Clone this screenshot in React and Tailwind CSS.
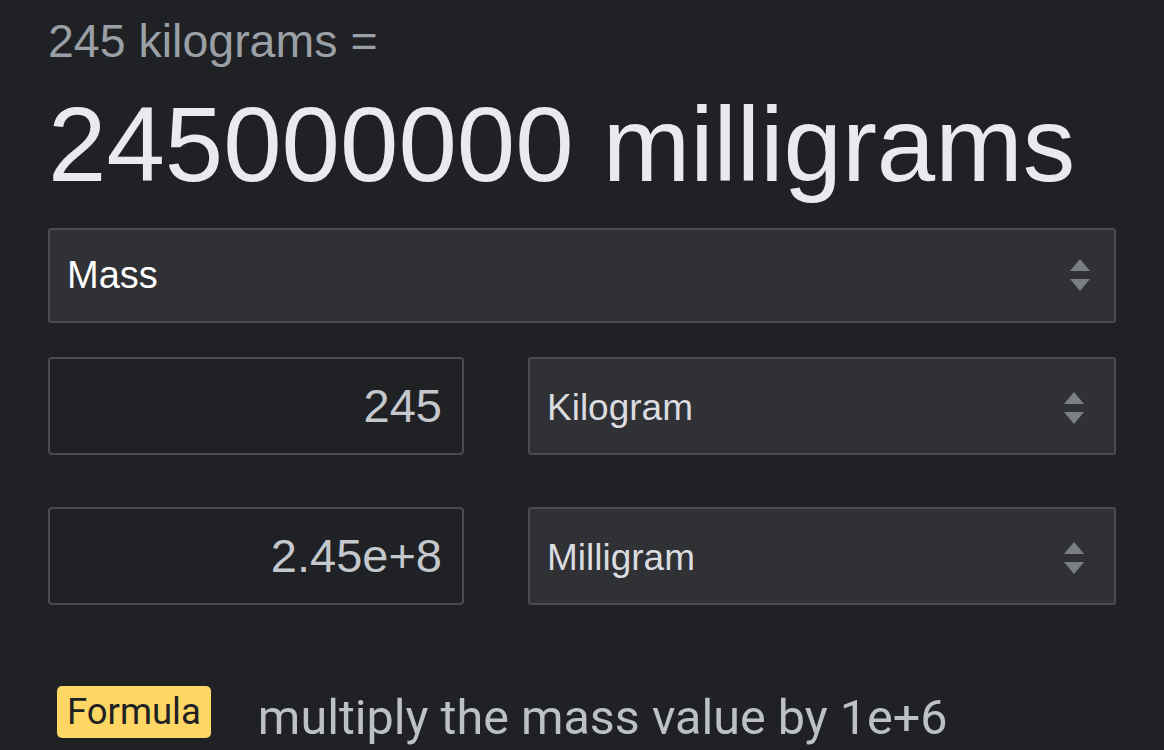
import React from "react";

function Arrows() {
  return (
    <svg width="24" height="36" viewBox="0 0 24 36" className="shrink-0">
      <path d="M12 2 L22 14 L2 14 Z" fill="#7b7e83" />
      <path d="M12 34 L22 22 L2 22 Z" fill="#7b7e83" />
    </svg>
  );
}

function SelectBox({ label, className = "" }) {
  return (
    <div
      className={`flex items-center justify-between bg-[#303134] border-2 border-[#4a4c50] rounded-[3px] pl-[17px] pr-[22px] ${className}`}
    >
      <span>{label}</span>
      <Arrows />
    </div>
  );
}

function ValueBox({ value }) {
  return (
    <div className="w-[416px] h-[98px] flex items-center justify-end border-2 border-[#4a4c50] rounded-[4px] pr-[20px] text-[47px] font-light text-[#c4c7cc] leading-none">
      {value}
    </div>
  );
}

export default function App() {
  const font = { fontFamily: '"Liberation Sans", Arial, sans-serif' };
  return (
    <div className="min-h-screen w-full bg-[#202124] overflow-hidden" style={font}>
      <div className="px-[48px] flex flex-col">
        <div className="mt-[18px] text-[46.5px] leading-none font-light text-[#9aa0a6]">245 kilograms =</div>
        <div className="mt-[27px] text-[105px] leading-none font-light text-[#e8eaed] whitespace-nowrap">
          245000000 milligrams
        </div>

        <SelectBox label="Mass" className="mt-[31px] h-[95px] w-[1068px] text-[38px] text-white" />

        <div className="mt-[34px] flex gap-[64px]">
          <ValueBox value="245" />
          <SelectBox label="Kilogram" className="h-[98px] w-[588px] text-[37px] font-light text-[#dadce0] pr-[28px] pt-[4px]" />
        </div>

        <div className="mt-[52px] flex gap-[64px]">
          <ValueBox value="2.45e+8" />
          <SelectBox label="Milligram" className="h-[98px] w-[588px] text-[37px] font-light text-[#dadce0] pr-[28px] pt-[4px]" />
        </div>

        <div className="mt-[77px] ml-[9px] flex items-center gap-[47px]" style={{ fontFamily: 'Roboto, "Liberation Sans", sans-serif' }}>
          <span className="bg-[#fdd663] text-[#202124] rounded-[5px] px-[10px] h-[52px] flex items-center text-[36.5px] leading-none">
            Formula
          </span>
          <span className="text-[48.5px] leading-none text-[#bdc1c6] mt-[12px] whitespace-nowrap">multiply the mass value by 1e+6</span>
        </div>
      </div>
    </div>
  );
}
